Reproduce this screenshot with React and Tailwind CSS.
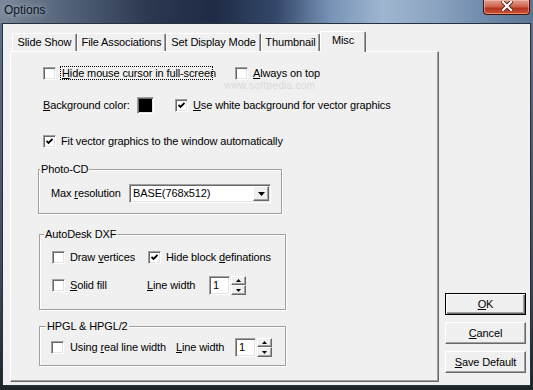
import React from "react";

const sunken =
  "border border-t-[#a0a0a0] border-l-[#a0a0a0] border-r-white border-b-white shadow-[inset_1px_1px_0_#696969,inset_-1px_-1px_0_#e3e3e3]";
const raised =
  "border border-t-white border-l-white border-r-[#696969] border-b-[#696969] shadow-[inset_-1px_-1px_0_#a0a0a0] bg-[#f0f0f0]";

function U({ children }) {
  return <span className="underline underline-offset-[1px] decoration-1">{children}</span>;
}

function Check({ checked }) {
  return (
    <span
      className={`flex h-[13px] w-[13px] shrink-0 items-center justify-center bg-white ${sunken}`}
    >
      {checked && (
        <svg width="7" height="7" viewBox="0 0 7 7">
          <polyline points="0.5,3 2.5,5 6.5,1" fill="none" stroke="black" strokeWidth="1.8" />
        </svg>
      )}
    </span>
  );
}

function UpArrow() {
  return (
    <svg width="5" height="3" viewBox="0 0 5 3">
      <path d="M2.5 0 L5 3 L0 3 Z" fill="black" />
    </svg>
  );
}
function DownArrow() {
  return (
    <svg width="5" height="3" viewBox="0 0 5 3">
      <path d="M0 0 L5 0 L2.5 3 Z" fill="black" />
    </svg>
  );
}

function Spin() {
  return (
    <div className="flex h-[19px] gap-[1px]">
      <div className={`flex h-[19px] w-[21px] items-center bg-white pl-[3px] ${sunken}`}>1</div>
      <div className="flex w-[15px] flex-col">
        <div className={`flex h-[9px] items-center justify-center ${raised}`}>
          <UpArrow />
        </div>
        <div className={`flex h-[10px] items-center justify-center ${raised}`}>
          <DownArrow />
        </div>
      </div>
    </div>
  );
}

function Group({ label, labelPos, className, children }) {
  return (
    <div
      className={`relative border border-[#a0a0a0] shadow-[inset_1px_1px_0_white,1px_1px_0_white] ${className}`}
    >
      <span className={`absolute -top-[7px] ${labelPos} whitespace-nowrap bg-[#f0f0f0] px-[1px] leading-[13px]`}>
        {label}
      </span>
      {children}
    </div>
  );
}

function Tab({ label, w, selected }) {
  return (
    <div
      className={`flex items-center justify-center whitespace-nowrap rounded-t-[2px] border-l border-t border-r border-l-white border-t-white border-r-[#696969] shadow-[inset_-1px_0_0_#a0a0a0] ${w} ${
        selected ? "relative z-10 -mb-[1px] h-[21px] bg-[#f0f0f0] pb-[3px]" : "h-[18px]"
      }`}
    >
      {label}
    </div>
  );
}

function Button({ children, def }) {
  return (
    <div
      className={`flex h-[22px] w-[81px] items-center justify-center ${
        def
          ? "border border-black bg-[#f0f0f0] shadow-[inset_1px_1px_0_white,inset_-1px_-1px_0_#696969,inset_-2px_-2px_0_#a0a0a0]"
          : raised
      }`}
    >
      {children}
    </div>
  );
}

export default function App() {
  return (
    <div className="flex h-[390px] w-[533px] flex-col overflow-hidden bg-[linear-gradient(to_bottom,#62748c,#3c4a5c_70%,#1b2426)] font-[family-name:Liberation_Sans,Arial,sans-serif] text-[11px] leading-[13px] tracking-[-0.12px] text-black">
      {/* Title bar */}
      <div className="relative flex h-[23px] shrink-0 items-start bg-[linear-gradient(to_right,#7a8798_0%,#55647a_12%,#2b3850_28%,#1f2b45_40%,#34486a_52%,#7893b6_62%,#9fb6d0_72%,#8aa3c0_82%,#6c87a8_92%,#5d7594_100%)]">
        <span className="ml-[4px] mt-[3px] text-[12px] leading-[15px] tracking-normal text-[#0c1220] [text-shadow:0_0_6px_rgba(230,240,255,0.7)]">
          Options
        </span>
        <div className="relative ml-auto mr-[3px] flex h-[15px] w-[47px] items-start justify-center rounded-b-[4px] border border-t-0 border-[#4a1208] bg-[linear-gradient(to_bottom,#e3a090,#cf6650_45%,#b5361e_60%,#c9553a)] shadow-[inset_0_0_0_1px_rgba(255,200,180,0.5)]">
          <svg width="12" height="10" viewBox="0 0 12 10" className="mt-[1px]">
            <path d="M2 1 L10 9 M10 1 L2 9" stroke="#5a2018" strokeWidth="4" strokeLinecap="square" />
            <path d="M2 1 L10 9 M10 1 L2 9" stroke="white" strokeWidth="2.2" strokeLinecap="square" />
          </svg>
        </div>
      </div>

      {/* Client area */}
      <div className="ml-[2px] flex h-[363px] w-[529px] shrink-0 border border-[#27313d] bg-[#f0f0f0]">
        {/* Left: tabs + panel */}
        <div className="flex flex-col pl-[7px] pt-[7px]">
          <div className="flex h-[20px] items-end pl-[2px]">
            <Tab label="Slide Show" w="w-[65px]" />
            <Tab label="File Associations" w="w-[89px]" />
            <Tab label="Set Display Mode" w="w-[95px]" />
            <Tab label="Thumbnail" w="w-[59px]" />
            <Tab label="Misc" w="w-[46px]" selected />
          </div>
          <div className="relative h-[331px] w-[429px] border border-l-white border-t-white border-r-[#696969] border-b-[#696969] shadow-[inset_-1px_-1px_0_#a0a0a0]">
            {/* watermark */}
            <span className="pointer-events-none absolute left-[213px] top-[27px] text-[10px] tracking-[0.3px] text-[#d9d9d9]">
              www.softpedia.com
            </span>

            <div className="relative flex flex-col pl-[27px]">
              {/* Row 1 */}
              <div className="ml-[5px] mt-[14px] flex h-[14px] items-center whitespace-nowrap">
                <Check />
                <span className="ml-[4px] block h-[14px] w-[153px] border border-dotted border-black px-[1px] leading-[12px]">
                  <U>H</U>ide mouse cursor in full-screen
                </span>
                <span className="ml-[22px]">
                  <Check />
                </span>
                <span className="ml-[5px]">
                  <U>A</U>lways on top
                </span>
              </div>

              {/* Row 2 */}
              <div className="ml-[5px] mt-[17px] flex h-[17px] items-center whitespace-nowrap">
                <span className="w-[94px]">
                  <U>B</U>ackground color:
                </span>
                <span className={`h-[17px] w-[17px] bg-black ${sunken}`} />
                <span className="ml-[21px]">
                  <Check checked />
                </span>
                <span className="ml-[5px]">
                  <U>U</U>se white background for vector graphics
                </span>
              </div>

              {/* Row 3 */}
              <div className="ml-[5px] mt-[20px] flex h-[14px] items-center whitespace-nowrap">
                <Check checked />
                <span className="ml-[5px]">Fit vector graphics to the window automatically</span>
              </div>

              {/* Photo-CD */}
              <Group label="Photo-CD" labelPos="left-[1px]" className="mt-[21px] h-[45px] w-[244px]">
                <div className="mt-[14px] flex h-[19px] items-center whitespace-nowrap pl-[12px]">
                  <span className="w-[78px]">
                    Max <U>r</U>esolution
                  </span>
                  <div className={`flex h-[19px] w-[142px] bg-white p-[1px] ${sunken}`}>
                    <span className="flex flex-1 items-center pl-[2px]">BASE(768x512)</span>
                    <div className={`flex h-[15px] w-[16px] items-center justify-center ${raised}`}>
                      <svg width="7" height="4" viewBox="0 0 7 4">
                        <path d="M0 0 H7 L3.5 4 Z" fill="black" />
                      </svg>
                    </div>
                  </div>
                </div>
              </Group>

              {/* AutoDesk DXF */}
              <Group label="AutoDesk DXF" labelPos="left-[4px]" className="ml-[1px] mt-[20px] h-[76px] w-[247px]">
                <div className="flex flex-col whitespace-nowrap pl-[12px] pt-[15px]">
                  <div className="flex h-[14px] items-center">
                    <div className="flex w-[96px] items-center">
                      <Check />
                      <span className="ml-[5px]">
                        Draw <U>v</U>ertices
                      </span>
                    </div>
                    <Check checked />
                    <span className="ml-[5px]">
                      Hide block <U>d</U>efinations
                    </span>
                  </div>
                  <div className="mt-[12px] flex h-[19px] items-center">
                    <div className="flex w-[95px] items-center">
                      <Check />
                      <span className="ml-[5px]">
                        <U>S</U>olid fill
                      </span>
                    </div>
                    <span className="w-[62px]">
                      <U>L</U>ine width
                    </span>
                    <Spin />
                  </div>
                </div>
              </Group>

              {/* HPGL */}
              <Group label="HPGL & HPGL/2" labelPos="left-[6px]" className="ml-[1px] mt-[16px] h-[40px] w-[247px]">
                <div className="mt-[11px] flex h-[19px] items-center whitespace-nowrap pl-[11px]">
                  <div className="flex w-[125px] items-center">
                    <Check />
                    <span className="ml-[6px]">
                      Using <U>r</U>eal line width
                    </span>
                  </div>
                  <span className="w-[59px]">
                    <U>L</U>ine width
                  </span>
                  <Spin />
                </div>
              </Group>
            </div>
          </div>
        </div>

        {/* Right: buttons */}
        <div className="ml-[6px] flex flex-col gap-[7px] pt-[269px]">
          <Button def>
            <U>O</U>K
          </Button>
          <Button>
            <U>C</U>ancel
          </Button>
          <Button>
            <U>S</U>ave Default
          </Button>
        </div>
      </div>
    </div>
  );
}
